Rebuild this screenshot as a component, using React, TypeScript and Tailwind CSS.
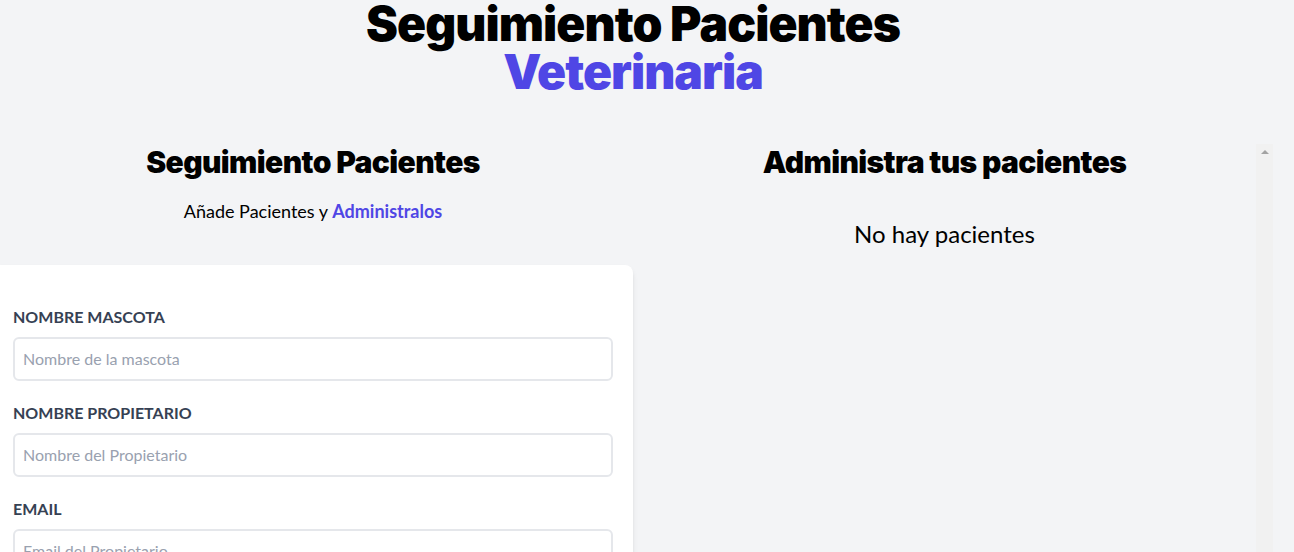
import React from "react";

const fields = [
  { id: "mascota", label: "Nombre Mascota", placeholder: "Nombre de la mascota", type: "text" },
  { id: "propietario", label: "Nombre Propietario", placeholder: "Nombre del Propietario", type: "text" },
  { id: "email", label: "Email", placeholder: "Email del Propietario", type: "email" },
  { id: "alta", label: "Alta", placeholder: "", type: "date" },
];

function Formulario() {
  return (
    <div className="w-1/2">
      <h2 className="font-['Inter',sans-serif] font-black text-3xl tracking-[-0.02em] text-center">
        Seguimiento Pacientes
      </h2>
      <p className="text-lg mt-[17px] text-center mb-10">
        Añade Pacientes y <span className="text-[#4f46e5] font-bold">Administralos</span>
      </p>
      <form className="bg-white shadow-md rounded-lg py-10 px-5 mb-10">
        {fields.map((f) => (
          <div key={f.id} className="mb-5">
            <label htmlFor={f.id} className="block text-gray-700 uppercase font-bold">
              {f.label}
            </label>
            <input
              id={f.id}
              type={f.type}
              placeholder={f.placeholder}
              className="border-2 border-gray-200 w-full p-2 mt-2 placeholder-gray-400 rounded-md outline-none"
            />
          </div>
        ))}
      </form>
    </div>
  );
}

function ListadoPacientes() {
  return (
    <div className="w-1/2 h-screen flex">
      <div className="flex-1">
        <h2 className="font-['Inter',sans-serif] font-black text-3xl tracking-[-0.02em] text-center">
          Administra tus pacientes
        </h2>
        <p className="text-2xl mt-[38px] text-center">No hay pacientes</p>
      </div>
      {/* scrollbar track */}
      <div className="w-[17px] bg-[#f1f1f1] flex justify-center pt-[6px]">
        <div className="w-0 h-0 border-l-[4px] border-r-[4px] border-b-[4px] border-l-transparent border-r-transparent border-b-[#a3a3a3]" />
      </div>
    </div>
  );
}

export default function App() {
  return (
    <div className="h-screen bg-gray-100 overflow-hidden font-['Lato','Noto_Sans',sans-serif]">
      <div className="w-[1280px] -ml-[7px]">
        <h1 className="font-['Inter',sans-serif] font-black text-5xl leading-none tracking-[-0.02em] text-center w-2/3 mx-auto">
          Seguimiento Pacientes <span className="block text-[#4f46e5]">Veterinaria</span>
        </h1>
        <div className="mt-12 flex">
          <Formulario />
          <ListadoPacientes />
        </div>
      </div>
    </div>
  );
}
